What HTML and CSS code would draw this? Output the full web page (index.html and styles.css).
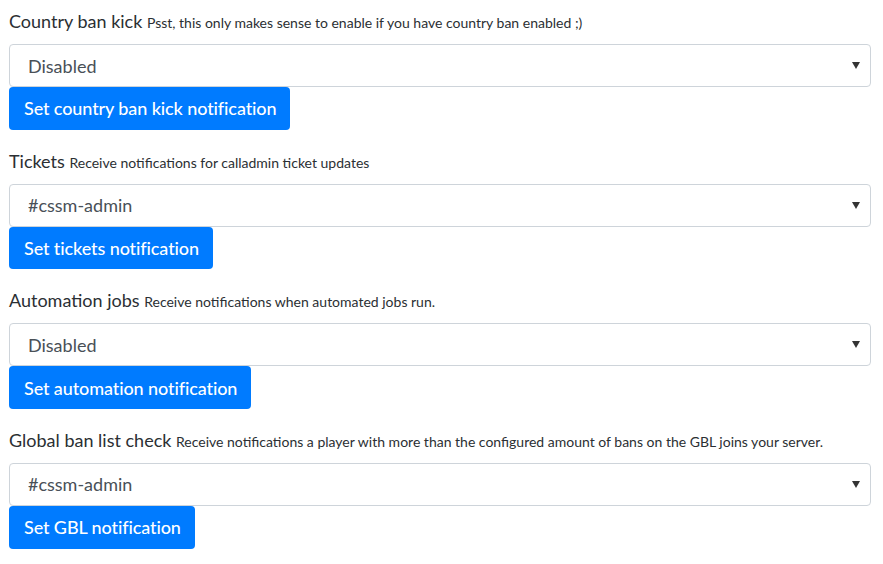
FILE: index.html
```html
<!DOCTYPE html>
<html>
<head>
<meta charset="utf-8">
<link rel="stylesheet" href="styles.css">
</head>
<body>
<div class="page">
  <div class="group">
    <label class="label">Country ban kick <small class="hint">Psst, this only makes sense to enable if you have country ban enabled ;)</small></label>
    <div class="select-wrap">
      <select class="select"><option>Disabled</option></select>
      <svg class="arrow" width="8" height="7" viewBox="0 0 8 7"><path d="M0 0H8L4 7Z" fill="#333"/></svg>
    </div>
    <button class="btn">Set country ban kick notification</button>
  </div>
  <div class="group">
    <label class="label">Tickets <small class="hint">Receive notifications for calladmin ticket updates</small></label>
    <div class="select-wrap">
      <select class="select"><option>#cssm-admin</option></select>
      <svg class="arrow" width="8" height="7" viewBox="0 0 8 7"><path d="M0 0H8L4 7Z" fill="#333"/></svg>
    </div>
    <button class="btn">Set tickets notification</button>
  </div>
  <div class="group">
    <label class="label">Automation jobs <small class="hint">Receive notifications when automated jobs run.</small></label>
    <div class="select-wrap">
      <select class="select"><option>Disabled</option></select>
      <svg class="arrow" width="8" height="7" viewBox="0 0 8 7"><path d="M0 0H8L4 7Z" fill="#333"/></svg>
    </div>
    <button class="btn">Set automation notification</button>
  </div>
  <div class="group">
    <label class="label">Global ban list check <small class="hint">Receive notifications a player with more than the configured amount of bans on the GBL joins your server.</small></label>
    <div class="select-wrap">
      <select class="select"><option>#cssm-admin</option></select>
      <svg class="arrow" width="8" height="7" viewBox="0 0 8 7"><path d="M0 0H8L4 7Z" fill="#333"/></svg>
    </div>
    <button class="btn">Set GBL notification</button>
  </div>
</div>
</body>
</html>
```
FILE: styles.css
```css
html, body {
  margin: 0;
  padding: 0;
  background: #fff;
}
body {
  font-family: Lato, "Open Sans", sans-serif;
  color: #212529;
}
.page {
  padding: 8px 12px 0 9px;
}
.group {
  display: flex;
  flex-direction: column;
  align-items: flex-start;
  margin-bottom: 18px;
}
.label {
  display: block;
  font-size: 18px;
  line-height: 27px;
  height: 27px;
  margin-bottom: 9px;
  color: #2b2f33;
  font-weight: 400;
}
.hint {
  font-size: 14px;
  line-height: 1;
}
.select-wrap {
  position: relative;
  align-self: stretch;
}
.select {
  display: block;
  width: 100%;
  height: 43px;
  box-sizing: border-box;
  -webkit-appearance: none;
  appearance: none;
  border: 1px solid #ced4da;
  border-radius: 4px;
  background: #fff;
  font-family: Lato, sans-serif;
  font-size: 18px;
  color: #495057;
  padding: 0 30px 0 18px;
}
.arrow {
  position: absolute;
  right: 11px;
  top: 18px;
}
.btn {
  font-family: Lato, sans-serif;
  font-size: 18px;
  font-weight: 500;
  letter-spacing: -0.1px;
  color: #fff;
  background: #007bff;
  border: 0;
  border-radius: 4px;
  height: 42.67px;
  padding: 0 14px 0 15px;
}
```
